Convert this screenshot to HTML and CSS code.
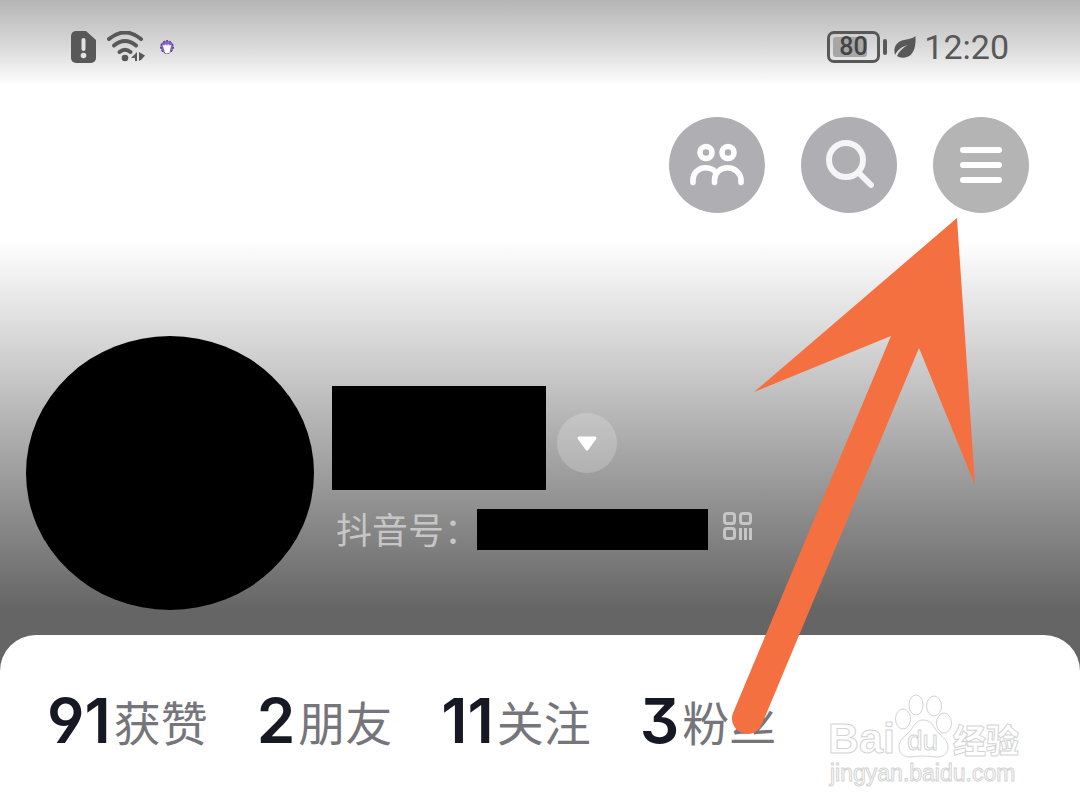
FILE: index.html
```html
<!DOCTYPE html>
<html lang="zh-CN">
<head>
  <meta charset="UTF-8" />
  <meta name="viewport" content="width=device-width, initial-scale=1.0" />
  <title>抖音</title>
  <link rel="stylesheet" href="styles.css">
</head>
<body>
  <div class="page">

    <div class="status-bar">
      <div class="status-left">
        <svg width="26" height="32" viewBox="0 0 26 32">
          <path d="M5 0h10l10 9v18a5 5 0 0 1-5 5H5a5 5 0 0 1-5-5V5a5 5 0 0 1 5-5z" fill="#585858"/>
          <path d="M12.500 9v9" stroke="#e2e2e2" stroke-width="4" stroke-linecap="round"/>
          <circle cx="12.500" cy="24.500" r="2.800" fill="#e2e2e2"/>
        </svg>
        <svg width="38" height="32" viewBox="0 0 38 32">
          <g fill="none" stroke="#585858" stroke-width="4" stroke-linecap="round">
            <path d="M2 8Q18 -5 34 8"/>
            <path d="M7 14.500Q18 5.500 29 14.500"/>
            <path d="M12.500 21Q18 16.500 23.500 21"/>
          </g>
          <circle cx="18" cy="27" r="3.300" fill="#585858"/>
          <path d="M30 21v9h-2v-3h-4zM32 21l6 3.500-3.500 4L32 30z" fill="#585858"/>
        </svg>
        <svg class="app-dot" width="14" height="14" viewBox="0 0 14 14">
          <circle cx="7" cy="7" r="6.300" fill="#8a62cc" stroke="#2c2140" stroke-width="1" stroke-dasharray="2 1.500"/>
          <path d="M5 13L3.500 7.500 2.500 5l2 .5L6 4l1 2 1-2 1.500 1.500 2-.5-1 3L9.500 13z" fill="#fff"/>
        </svg>
      </div>
      <div class="status-right">
        <div class="battery"><span>80</span></div>
        <div class="battery-tip"></div>
        <svg class="leaf" width="22" height="22" viewBox="0 0 22 22">
          <path d="M21.500 0C22 11 20 20 11 21.500 8 22 5 21.500 3 20 5 15.500 8.500 12 14 9 8 10.500 4 13.500 1 19 -1 12 2 6.500 8 4.500 13 3 17 3.500 21.500 0z" fill="#585858"/>
        </svg>
        <span class="clock">12:20</span>
      </div>
    </div>

    <div class="actions">
      <button class="action" aria-label="朋友">
        <svg width="54" height="44" viewBox="0 0 54 44" fill="none" stroke="#fff" stroke-width="5.600" stroke-linecap="round">
          <circle cx="16" cy="9.500" r="6"/>
          <circle cx="38" cy="9.500" r="6"/>
          <path d="M3 39.500V37C3 30 8.500 24.800 15.500 24.800c4 0 7 1.200 9.500 3.700"/>
          <path d="M24.500 39.500V37C24.500 30 30.500 24.800 37.500 24.800S51 30 51 37v2.500"/>
        </svg>
      </button>
      <button class="action" aria-label="搜索">
        <svg width="50" height="50" viewBox="0 0 50 50" fill="none" stroke="#f5f5f5" stroke-width="6" stroke-linecap="round">
          <circle cx="22" cy="20" r="17"/>
          <path d="M35 33l12 12"/>
        </svg>
      </button>
      <button class="action action-menu" aria-label="菜单">
        <svg width="42" height="36" viewBox="0 0 42 36" stroke="#fff" stroke-width="6" stroke-linecap="round">
          <path d="M3 3h36M3 18h36M3 33h36"/>
        </svg>
      </button>
    </div>

    <div class="profile">
      <div class="avatar"></div>
      <div class="info">
        <div class="name-row">
          <div class="name"></div>
          <button class="switch" aria-label="切换账号">
            <svg width="20" height="16" viewBox="0 0 20 16">
              <path d="M2 3h16l-8 11z" fill="#fff" stroke="#fff" stroke-width="3" stroke-linejoin="round"/>
            </svg>
          </button>
        </div>
        <div class="id-row">
          <span>抖音号：</span>
          <div class="id-number"></div>
          <svg class="qr" width="30" height="28" viewBox="0 0 30 28" fill="none" stroke="#c6c6c6" stroke-width="3">
            <rect x="1.500" y="1.500" width="10" height="10" rx="2.500"/>
            <rect x="17.500" y="1.500" width="10" height="10" rx="2.500"/>
            <rect x="1.500" y="16.500" width="10" height="10" rx="2.500"/>
            <path d="M17.500 16v12M22.500 16v12M27.500 16v12"/>
          </svg>
        </div>
      </div>
    </div>

    <div class="panel">
      <div class="stats">
        <a href="#" class="stat"><strong>91</strong><span>获赞</span></a>
        <a href="#" class="stat"><strong>2</strong><span>朋友</span></a>
        <a href="#" class="stat"><strong>11</strong><span>关注</span></a>
        <a href="#" class="stat"><strong>3</strong><span>粉丝</span></a>
      </div>
      <svg class="watermark" width="200" height="100" viewBox="0 0 200 100">
        <g class="mark">
          <text x="0" y="60" font-size="43" font-weight="700">Bai</text>
          <ellipse cx="75" cy="26" rx="7.500" ry="10"/>
          <ellipse cx="88" cy="12" rx="7" ry="10"/>
          <ellipse cx="106" cy="13" rx="7.500" ry="10"/>
          <ellipse cx="116" cy="30" rx="7.500" ry="10"/>
          <path d="M95 27c7 0 10 5 13 10 4 6 12 9 12 17 0 7-5 10-11 10-5 0-9-1-14-1s-9 1-13 1c-7 0-11-4-11-10 0-8 7-11 12-17 3-5 6-10 12-10z"/>
          <text x="79" y="57" font-size="28">du</text>
          <text x="125" y="60" font-size="33" font-weight="900">经验</text>
          <text x="2" y="88" font-size="23">jingyan.baidu.com</text>
        </g>
      </svg>
    </div>

    <!-- pointer to the menu button -->
    <svg class="arrow" width="225" height="520" viewBox="0 0 225 520">
      <path d="M206 2L3 176 140 120 -18 497A15.500 15.500 0 0 0 11 508L168 132 224 269z" fill="#f57040"/>
    </svg>
  </div>
</body>
</html>
```
FILE: styles.css
```css
* {
  box-sizing: border-box;
}

body {
  margin: 0;
  font-family: Roboto, "Noto Sans CJK SC", sans-serif;
}

.page {
  position: relative;
  display: flex;
  flex-direction: column;
  min-height: 100vh;
  overflow: hidden;
  background: linear-gradient(#b5b5b5 0, #d8d8d8 45px, #fff 86px, #fff 240px, #dfdfdf 320px, #cacaca 370px, #929292 500px, #656565 610px);
}

/* status bar */
.status-bar {
  display: flex;
  justify-content: space-between;
  align-items: center;
  height: 93px;
  padding: 0 71px;
  color: #585858;
}

.status-left,
.status-right {
  display: flex;
  align-items: center;
}

.status-left {
  gap: 10px;
}

.app-dot {
  margin-left: 5px;
}

.battery {
  width: 53px;
  height: 32px;
  padding: 3px;
  border: 3px solid #585858;
  border-radius: 7px;
}

.battery span {
  display: block;
  width: 34px;
  height: 20px;
  padding-left: 6px;
  border-radius: 3px;
  background: #a6a6a6;
  color: #444;
  font-size: 25px;
  font-weight: 500;
  line-height: 20px;
}

.battery-tip {
  width: 4px;
  height: 16px;
  margin: 0 7px 0 3px;
  border-radius: 2px;
  background: #585858;
}

.leaf {
  margin-right: 8px;
}

.clock {
  font-size: 34px;
  line-height: 40px;
}

/* top buttons */
.actions {
  display: flex;
  justify-content: flex-end;
  gap: 36px;
  padding: 24px 51px 0;
}

.action {
  display: flex;
  justify-content: center;
  align-items: center;
  width: 96px;
  height: 96px;
  padding: 0;
  border: none;
  border-radius: 50%;
  background: #afaeb3;
  cursor: pointer;
}

.action-menu {
  background: #b4b4b4;
}

/* profile */
.profile {
  display: flex;
  gap: 18px;
  padding: 123px 26px 25px;
}

.avatar {
  width: 288px;
  height: 274px;
  border-radius: 50%;
  background: #000;
}

.info {
  padding-top: 50px;
}

.name-row {
  display: flex;
  align-items: center;
  gap: 11px;
}

.name {
  width: 214px;
  height: 104px;
  background: #000;
}

.switch {
  display: flex;
  justify-content: center;
  align-items: center;
  width: 60px;
  height: 60px;
  margin-top: 10px;
  padding: 0;
  border: none;
  border-radius: 50%;
  background: rgba(255, 255, 255, 0.2);
  cursor: pointer;
}

.id-row {
  display: flex;
  margin-top: 19px;
  padding-left: 4px;
  color: #c6c6c6;
  font-family: "Noto Sans CJK SC", sans-serif;
  font-size: 36px;
  line-height: 38px;
}

.id-number {
  width: 231px;
  height: 41px;
  margin: 0 15px 0 -3px;
  background: #000;
}

.qr {
  margin-top: 3px;
}

/* stats */
.panel {
  display: flex;
  flex: 1;
  justify-content: space-between;
  align-items: flex-start;
  padding: 56px 52px 16px 47px;
  border-radius: 36px 36px 0 0;
  background: #fff;
}

.stats {
  display: flex;
  gap: 49px;
}

.stat {
  display: flex;
  align-items: center;
  gap: 3px;
  color: #75757b;
  font-family: "Noto Sans CJK SC", sans-serif;
  font-size: 47px;
  line-height: 60px;
  text-decoration: none;
}

.stat strong {
  color: #161823;
  font-family: Inter, sans-serif;
  font-size: 62px;
  font-weight: 600;
  font-feature-settings: "ss01", "cv09";
}

.watermark {
  margin-top: 2px;
  overflow: visible;
}

.mark {
  fill: #fff;
  stroke: #d4d4d4;
  stroke-width: 1px;
  font-family: "Liberation Sans", "Noto Sans CJK SC", sans-serif;
}

/* arrow */
.arrow {
  position: absolute;
  top: 216px;
  right: 104px;
  overflow: visible;
}
```
